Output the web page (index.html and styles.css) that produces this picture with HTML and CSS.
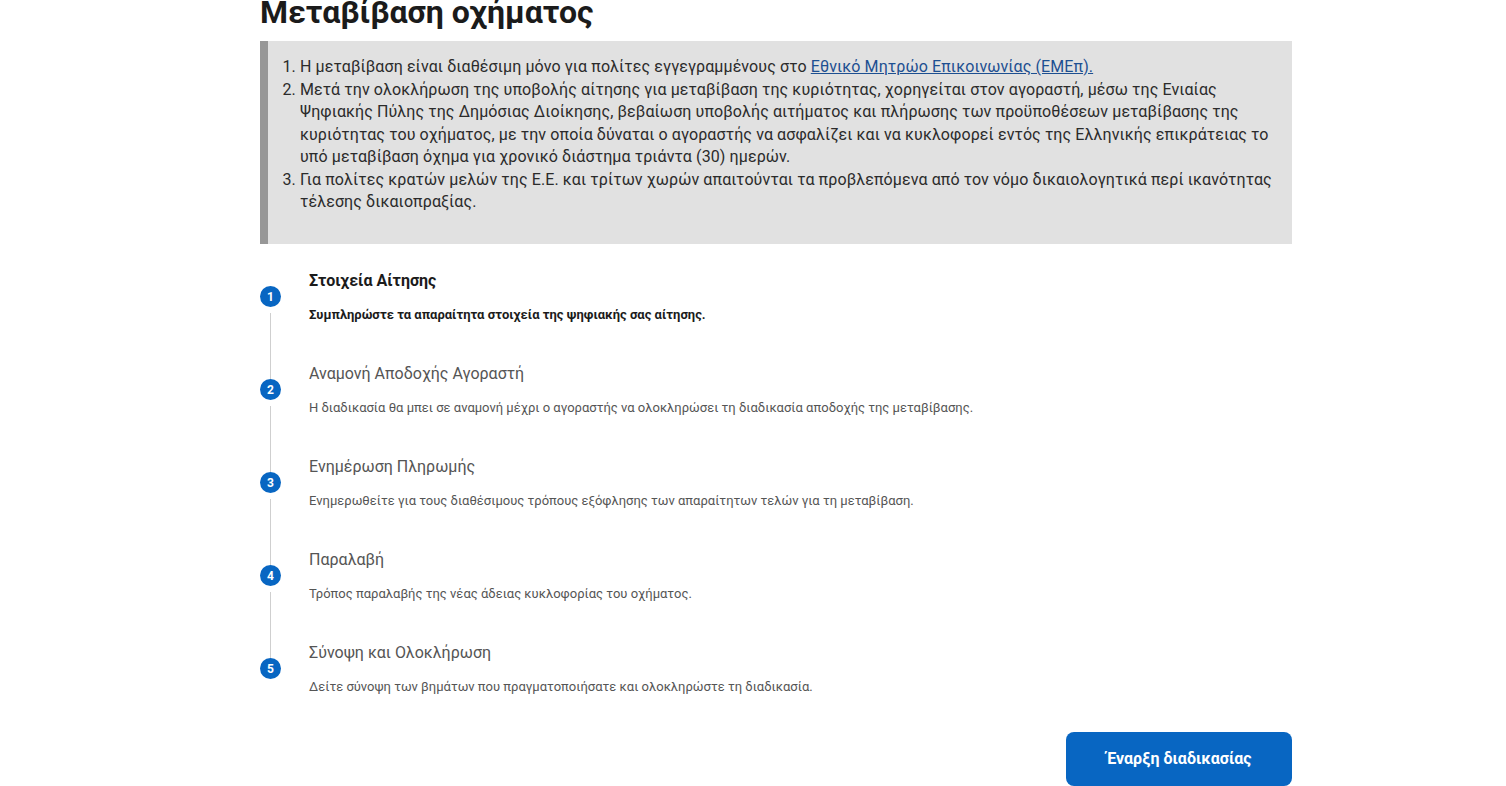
FILE: index.html
```html
<!DOCTYPE html>
<html lang="el">
<head>
    <meta charset="UTF-8">
    <meta name="viewport" content="width=device-width, initial-scale=1.0">
    <title>Μεταβίβαση οχήματος</title>
    <link rel="stylesheet" href="styles.css">
</head>
<body>
    <div class="page">
        <h1>Μεταβίβαση οχήματος</h1>

        <div class="notice">
            <ol>
                <li>Η μεταβίβαση είναι διαθέσιμη μόνο για πολίτες εγγεγραμμένους στο <a href="#">Εθνικό Μητρώο Επικοινωνίας (ΕΜΕπ).</a></li>
                <li>Μετά την ολοκλήρωση της υποβολής αίτησης για μεταβίβαση της κυριότητας, χορηγείται στον αγοραστή, μέσω της Ενιαίας Ψηφιακής Πύλης της Δημόσιας Διοίκησης, βεβαίωση υποβολής αιτήματος και πλήρωσης των προϋποθέσεων μεταβίβασης της κυριότητας του οχήματος, με την οποία δύναται ο αγοραστής να ασφαλίζει και να κυκλοφορεί εντός της Ελληνικής επικράτειας το υπό μεταβίβαση όχημα για χρονικό διάστημα τριάντα (30) ημερών.</li>
                <li>Για πολίτες κρατών μελών της Ε.Ε. και τρίτων χωρών απαιτούνται τα προβλεπόμενα από τον νόμο δικαιολογητικά περί ικανότητας τέλεσης δικαιοπραξίας.</li>
            </ol>
        </div>

        <div class="steps">
            <div class="step active">
                <div class="step-marker"><span>1</span></div>
                <div class="step-body">
                    <div class="step-title">Στοιχεία Αίτησης</div>
                    <div class="step-desc">Συμπληρώστε τα απαραίτητα στοιχεία της ψηφιακής σας αίτησης.</div>
                </div>
            </div>
            <div class="step">
                <div class="step-marker"><span>2</span></div>
                <div class="step-body">
                    <div class="step-title">Αναμονή Αποδοχής Αγοραστή</div>
                    <div class="step-desc">Η διαδικασία θα μπει σε αναμονή μέχρι ο αγοραστής να ολοκληρώσει τη διαδικασία αποδοχής της μεταβίβασης.</div>
                </div>
            </div>
            <div class="step">
                <div class="step-marker"><span>3</span></div>
                <div class="step-body">
                    <div class="step-title">Ενημέρωση Πληρωμής</div>
                    <div class="step-desc">Ενημερωθείτε για τους διαθέσιμους τρόπους εξόφλησης των απαραίτητων τελών για τη μεταβίβαση.</div>
                </div>
            </div>
            <div class="step">
                <div class="step-marker"><span>4</span></div>
                <div class="step-body">
                    <div class="step-title">Παραλαβή</div>
                    <div class="step-desc">Τρόπος παραλαβής της νέας άδειας κυκλοφορίας του οχήματος.</div>
                </div>
            </div>
            <div class="step">
                <div class="step-marker"><span>5</span></div>
                <div class="step-body">
                    <div class="step-title">Σύνοψη και Ολοκλήρωση</div>
                    <div class="step-desc">Δείτε σύνοψη των βημάτων που πραγματοποιήσατε και ολοκληρώστε τη διαδικασία.</div>
                </div>
            </div>
        </div>

        <div class="actions">
            <button type="button" class="btn-start">Έναρξη διαδικασίας</button>
        </div>
    </div>
</body>
</html>
```

FILE: styles.css
```css
body {
    font-family: Roboto, "Noto Sans", Arial, sans-serif;
    background-color: #fff;
    color: #2b2b2b;
    margin: 0;
    padding: 0;
}
.page {
    width: 1032px;
    margin-left: 260px;
}
h1 {
    font-size: 32px;
    font-weight: 700;
    line-height: 30px;
    color: #1b1b1b;
    margin: -3px 0 0;
    padding-bottom: 14px;
}
.notice {
    background: #e1e1e1;
    border-left: 8px solid #979797;
    padding: 15px 16px 30px 14px;
}
.notice ol {
    margin: 0;
    padding-left: 18px;
    font-size: 16px;
    line-height: 22.5px;
    letter-spacing: 0.1px;
    color: #2b2b2b;
}
.notice a {
    color: #1d4f91;
    text-decoration: underline;
}
.steps {
    margin-top: 25px;
    display: flex;
    flex-direction: column;
    gap: 37px;
}
.step {
    display: flex;
    align-items: center;
    position: relative;
}
.step-marker {
    width: 21px;
    flex-shrink: 0;
}
.step-marker span {
    display: flex;
    align-items: center;
    justify-content: center;
    width: 21px;
    height: 21px;
    border-radius: 50%;
    background: #0866c2;
    color: #fff;
    font-size: 12px;
    font-weight: 700;
}
.step:not(:last-child)::after {
    content: "";
    position: absolute;
    left: 10px;
    top: calc(50% + 16px);
    width: 1px;
    height: 66px;
    background: #cfcfcf;
}
.step-body {
    padding-left: 28px;
}
.step-title {
    font-size: 16px;
    line-height: 24px;
    color: #555;
}
.step-desc {
    margin-top: 12px;
    font-size: 13px;
    line-height: 20px;
    color: #555;
}
.step.active .step-title {
    font-weight: 700;
    color: #1b1b1b;
}
.step.active .step-desc {
    font-weight: 700;
    color: #1b1b1b;
}
.actions {
    display: flex;
    justify-content: flex-end;
    margin-top: 35px;
}
.btn-start {
    width: 226px;
    height: 54px;
    border: none;
    border-radius: 8px;
    background-color: #0866c2;
    color: #fff;
    font-family: Roboto, "Noto Sans", Arial, sans-serif;
    font-size: 16px;
    font-weight: 700;
    cursor: pointer;
}
```
